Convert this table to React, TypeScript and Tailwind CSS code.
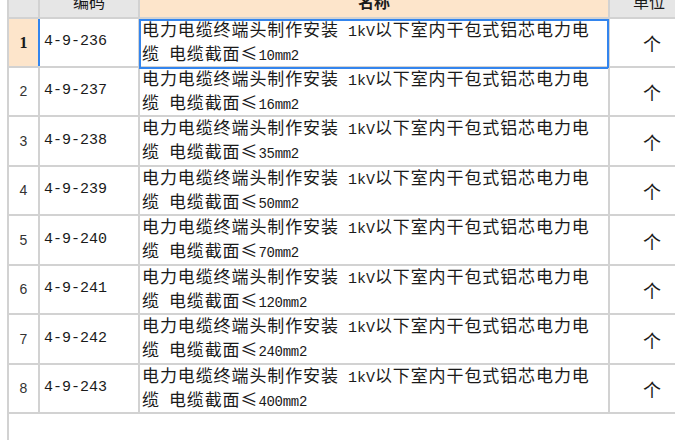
const rows = [
  { n: 1, code: '4-9-236', size: '10', h: 'h-[49px]' },
  { n: 2, code: '4-9-237', size: '16', h: 'h-[49px]' },
  { n: 3, code: '4-9-238', size: '35', h: 'h-[50px]' },
  { n: 4, code: '4-9-239', size: '50', h: 'h-[49px]' },
  { n: 5, code: '4-9-240', size: '70', h: 'h-[50px]' },
  { n: 6, code: '4-9-241', size: '120', h: 'h-[49px]' },
  { n: 7, code: '4-9-242', size: '240', h: 'h-[50px]' },
  { n: 8, code: '4-9-243', size: '400', h: 'h-[49px]' },
]

const cjk = "font-['Noto_Sans_CJK_SC',sans-serif]"
const mono = "font-['Liberation_Mono',monospace]"

export default function App() {
  return (
    <div className="h-[440px] w-[675px] overflow-hidden bg-white text-[#1a1a1a]">
      <div className="ml-[7px] h-full w-[700px] border-l-2 border-[#d2d2d2]">
        {/* Header (scrolled, text cut off at the top) */}
        <div className={`flex h-[19px] border-b-2 border-[#d2d2d2] ${cjk} text-[16px] leading-[18px]`}>
          <div className="w-[31px] border-r-2 border-[#d2d2d2] bg-[#e6e6e6]" />
          <div className="flex w-[100px] justify-center overflow-hidden border-r-2 border-[#d2d2d2] bg-[#e6e6e6]">
            <span className="mt-[-8px]">编码</span>
          </div>
          <div className="flex w-[470px] justify-center overflow-hidden border-r-2 border-[#d2d2d2] bg-[#fde5cb]">
            <span className="mt-[-8px] font-bold">名称</span>
          </div>
          <div className="flex w-[78px] justify-center overflow-hidden bg-[#e6e6e6]">
            <span className="mt-[-8px]">单位</span>
          </div>
        </div>

        {rows.map((r) => {
          const sel = r.n === 1
          return (
            <div key={r.n} className={`flex ${r.h} border-b-2 border-[#d2d2d2]`}>
              <div
                className={
                  sel
                    ? "flex w-[31px] items-center justify-center border-r-2 border-[#3385ee] bg-[#fde5cb] font-['Liberation_Serif',serif] text-[16px] font-bold"
                    : "flex w-[31px] items-center justify-center border-r-2 border-[#d2d2d2] font-['Liberation_Sans',sans-serif] text-[14px] text-[#333]"
                }
              >
                {r.n}
              </div>
              <div className={`flex w-[100px] items-center border-r-2 border-[#d2d2d2] pl-[4px] ${mono} text-[15px]`}>
                {r.code}
              </div>
              <div className={`relative flex w-[470px] flex-col justify-center border-r-2 border-[#d2d2d2] pl-[2px] ${cjk} text-[17px] leading-[20px] tracking-[0.9px]`}>
                <div className="whitespace-nowrap">
                  电力电缆终端头制作安装<span className={`${mono} text-[15px] tracking-normal`}> 1kV</span>以下室内干包式铝芯电力电
                </div>
                <div className="whitespace-nowrap">
                  缆<span className={`${mono} text-[15px] tracking-normal`}> </span>电缆截面≤
                  <span className={`${mono} text-[14px] tracking-[-0.3px]`}>{r.size}mm2</span>
                </div>
                {sel && <div className="absolute bottom-[-3px] left-[-1px] right-[-1px] top-0 border-2 border-[#3385ee]" />}
              </div>
              <div className={`flex w-[78px] items-center justify-center pl-[6px] pt-[2px] ${cjk} text-[18px]`}>个</div>
            </div>
          )
        })}
      </div>
    </div>
  )
}
